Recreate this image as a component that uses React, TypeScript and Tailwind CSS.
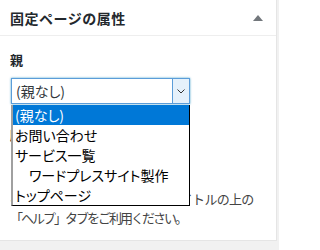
export default function App() {
  const pages = ['(親なし)', 'お問い合わせ', 'サービス一覧', '\u3000ワードプレスサイト製作', 'トップページ'];

  return (
    <div
      className="w-[279px] h-[250px] bg-[#f1f1f1] overflow-hidden"
      style={{ fontFamily: '"Noto Sans CJK JP", "Noto Sans", sans-serif' }}
    >
      <div className="w-[277px] h-[241px] bg-white border-r border-b border-[#e5e5e5]">
        {/* header */}
        <div className="h-[36px] flex items-center justify-between pl-[10px] pr-[13px] border-b border-[#eeeeee]">
          <h2 className="text-[14px] font-bold tracking-[0.5px] text-[#23282d] leading-none pt-[1px]">
            固定ページの属性
          </h2>
          <svg width="10" height="6" viewBox="0 0 10 6" className="text-[#72777c]">
            <polygon points="5,0 10,6 0,6" fill="currentColor" />
          </svg>
        </div>

        {/* body */}
        <div className="relative px-[10px] pt-[14px]">
          <p className="text-[13px] font-bold leading-[19px] text-[#23282d]">親</p>

          <div className="mt-[9px] ml-[1px] w-[179px] h-[26px] flex border border-[#5b9dd9] shadow-[0_0_2px_rgba(30,140,190,0.8)] bg-white">
            <span className="flex-1 pl-[4px] text-[14px] leading-[24px] text-[#32373c] [font-feature-settings:'palt']">
              (親なし)
            </span>
            <span className="w-[17px] flex items-center justify-center bg-[#e5f1fb] border-l border-[#5b9dd9]">
              <svg width="8" height="5" viewBox="0 0 8 5">
                <path d="M0.5 0.5 L4 4 L7.5 0.5" fill="none" stroke="#333" strokeWidth="1" />
              </svg>
            </span>
          </div>

          <p className="mt-[21px] text-[13px] font-bold leading-[19px] text-[#23282d]">順序</p>

          <div className="mt-[45px] text-[13px] leading-[19px] text-[#444] whitespace-nowrap">
            <p className="tracking-[-0.7px]">ヘルプが必要ですか ? 画面のタイトルの上の</p>
            <p className="tracking-[-2px]">「ヘルプ」タブをご利用ください。</p>
          </div>

          {/* open dropdown list */}
          <ul className="absolute top-[69px] left-[11px] w-[179px] border-l-2 border-l-[#a0a0a0] border-r border-b border-r-black border-b-black bg-white [font-feature-settings:'palt']">
            {pages.map((p, i) => (
              <li
                key={p}
                className={
                  i === 0
                    ? 'h-[20px] pl-[2px] text-[14px] leading-[20px] whitespace-pre bg-[#0078d7] text-white'
                    : 'h-[20px] pl-[2px] text-[14px] leading-[20px] whitespace-pre text-black'
                }
              >
                {p}
              </li>
            ))}
          </ul>
        </div>
      </div>
    </div>
  );
}
